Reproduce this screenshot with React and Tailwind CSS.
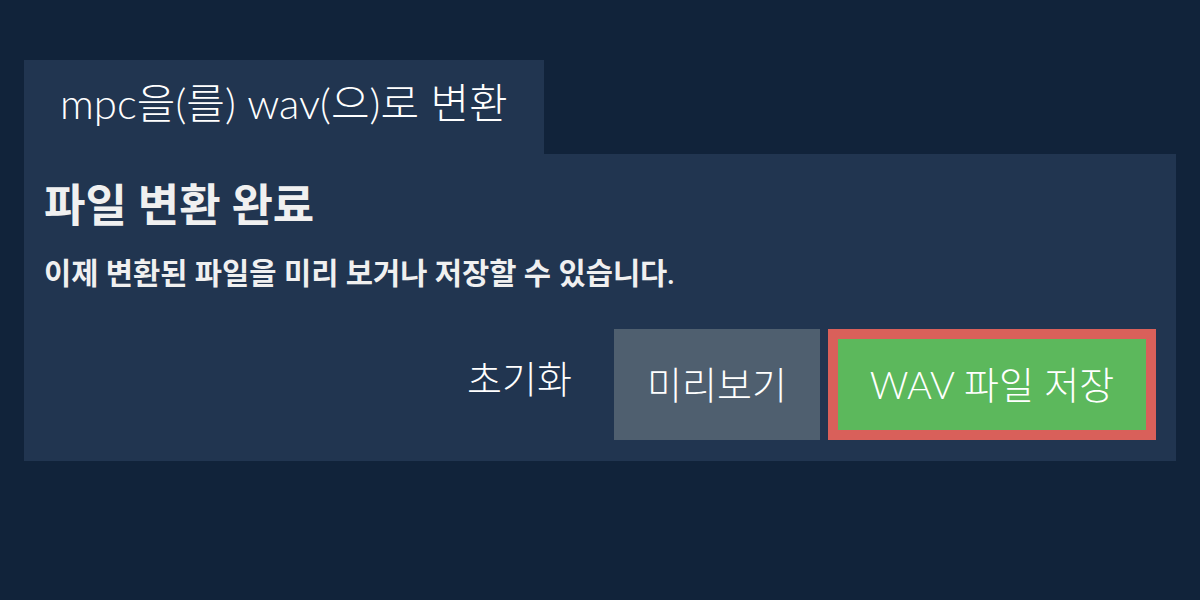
const font = { fontFamily: 'Lato, "Noto Sans CJK KR", sans-serif' };

export default function App() {
  return (
    <div className="w-[1200px] h-[600px] bg-[#11233a] pt-[60px] px-6" style={font}>
      <div className="flex">
        <div className="bg-[#213550] h-[94px] px-9 flex items-center">
          <span className="text-[42px] font-light text-white leading-none pb-2">mpc을(를) wav(으)로 변환</span>
        </div>
      </div>
      <div className="bg-[#213550] h-[307px] px-5 pt-[23px]">
        <h1 className="text-[45px] font-bold text-[#f0f0f0] leading-[56px]">파일 변환 완료</h1>
        <p className="text-[29.6px] font-semibold text-[#f0f0f0] mt-[20px] leading-[40px]">
          이제 변환된 파일을 미리 보거나 저장할 수 있습니다.
        </p>
        <div className="flex justify-end items-center gap-2 mt-[36px]">
          <button className="text-[38px] font-light text-white pl-[44px] pr-[34px] h-[111px] pb-3">초기화</button>
          <button className="bg-[#4f5f6f] text-[38px] font-light text-white w-[206px] h-[111px]">미리보기</button>
          <button className="bg-[#5cb85c] border-[10px] border-[#d9605a] text-[38px] font-light text-white w-[328px] h-[111px]">
            WAV 파일 저장
          </button>
        </div>
      </div>
    </div>
  );
}
